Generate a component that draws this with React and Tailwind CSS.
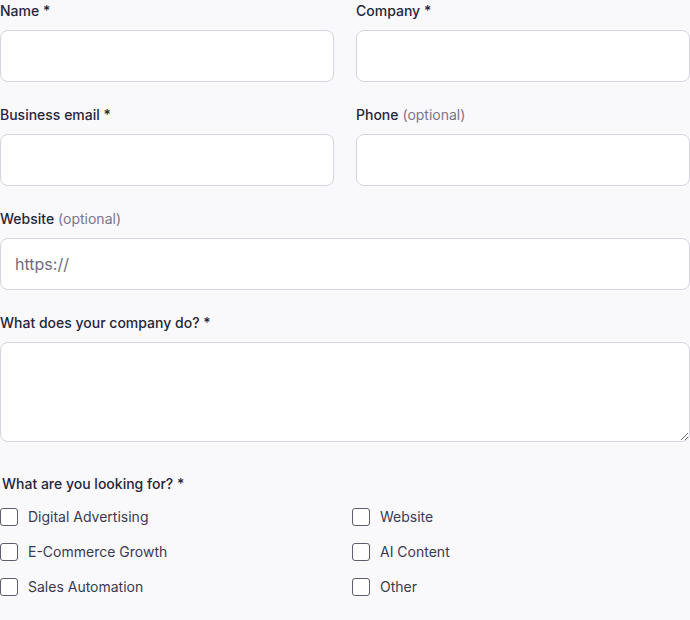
import React from 'react';

const inputCls =
    'block w-full h-[52px] rounded-lg border border-[#d6d3e2] bg-white px-[14px] text-base text-[#1f1e2e] placeholder:text-[#6f6e7e] outline-none';

const Label = ({ children, optional }) => (
    <label className="block text-sm leading-[22px] font-medium text-[#26253a]">
        {children}
        {optional && <span className="font-normal text-[#77758a]"> (optional)</span>}
    </label>
);

const Field = ({ label, optional, placeholder }) => (
    <div>
        <Label optional={optional}>{label}</Label>
        <input type="text" placeholder={placeholder} className={`mt-[8px] ${inputCls}`} />
    </div>
);

const options = [
    ['Digital Advertising', 'Website'],
    ['E-Commerce Growth', 'AI Content'],
    ['Sales Automation', 'Other'],
];

const Check = ({ label }) => (
    <label className="flex items-center gap-[10px] h-5 text-sm text-[#3a3952]">
        <span className="w-[18px] h-[18px] rounded-[3px] border border-[#5f5e6a] bg-white shrink-0" />
        {label}
    </label>
);

export default function App() {
    return (
        <div className="min-h-screen w-[690px] bg-[#f9f9fb]" style={{ fontFamily: 'Inter, "Noto Sans", sans-serif' }}>
            <div className="flex flex-col gap-[22px]">
                <div className="grid grid-cols-2 gap-x-[22px]">
                    <Field label="Name *" />
                    <Field label="Company *" />
                </div>
                <div className="grid grid-cols-2 gap-x-[22px]">
                    <Field label="Business email *" />
                    <Field label="Phone" optional />
                </div>
                <Field label="Website" optional placeholder="https://" />
                <div>
                    <Label>What does your company do? *</Label>
                    <textarea className="mt-[8px] block w-full h-[100px] rounded-lg border border-[#d6d3e2] bg-white px-[14px] py-3 text-base outline-none" />
                </div>
            </div>
            <fieldset className="mt-[32px]">
                <legend className="px-[2px] text-sm leading-5 font-medium text-[#26253a]">What are you looking for? *</legend>
                <div className="mt-[13px] flex flex-col gap-[15px]">
                    {options.map(([a, b]) => (
                        <div key={a} className="grid grid-cols-[352px_1fr]">
                            <Check label={a} />
                            <Check label={b} />
                        </div>
                    ))}
                </div>
            </fieldset>
        </div>
    );
}
